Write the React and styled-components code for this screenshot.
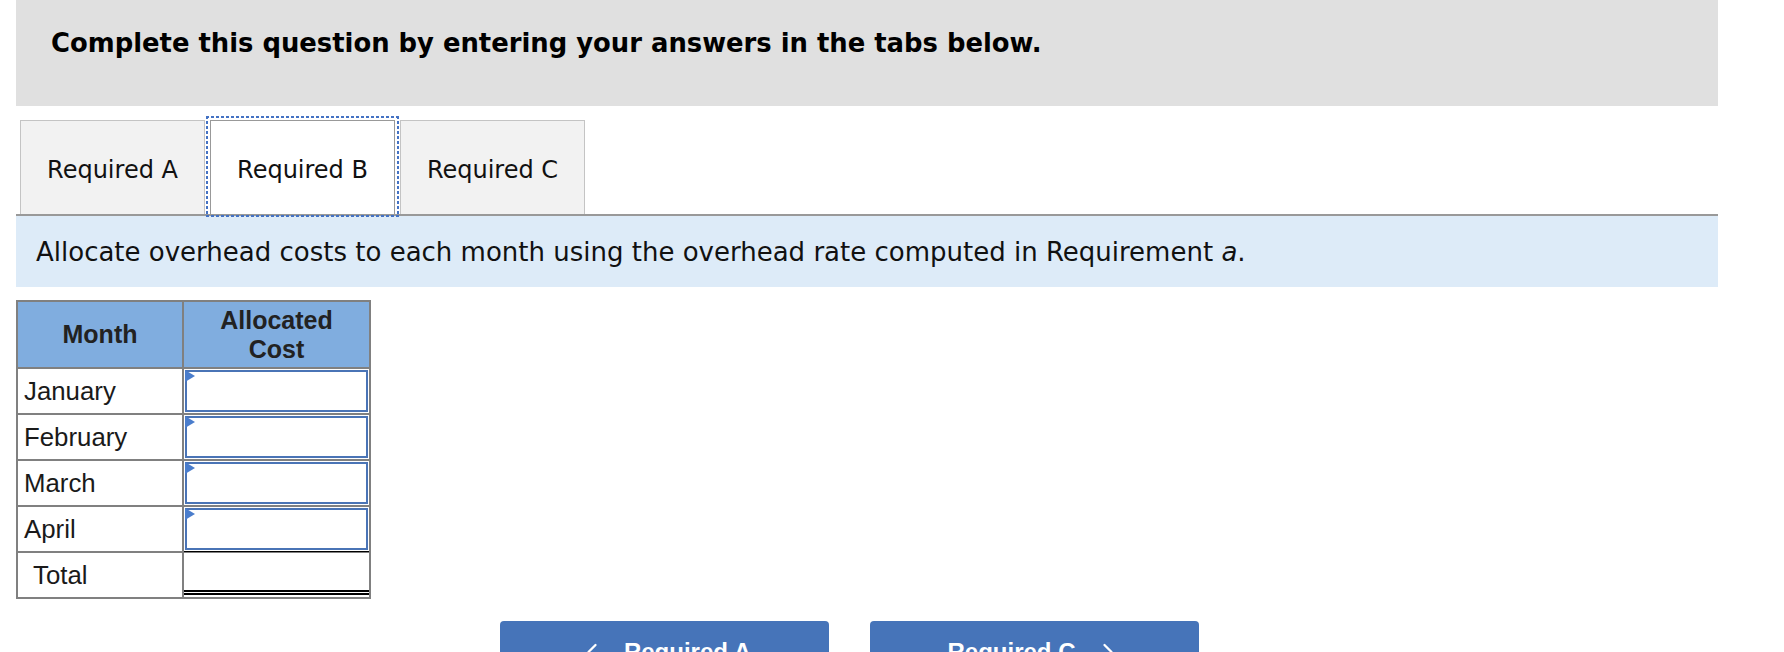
import React from 'react';
import styled, { createGlobalStyle } from 'styled-components';
import { ChevronLeft, ChevronRight } from 'lucide-react';

const GlobalStyle = createGlobalStyle`
  html, body {
    margin: 0;
    padding: 0;
    background: #fff;
  }
  body {
    font-family: "DejaVu Sans", Verdana, sans-serif;
    color: #111;
    overflow: hidden;
  }
`;

const Page = styled.div`
  width: 1702px;
  padding-left: 16px;
`;

const Header = styled.div`
  background: #e0e0e0;
  height: 106px;
  box-sizing: border-box;
  padding: 28px 0 0 35px;
  font-weight: bold;
  font-size: 25.85px;
  line-height: 30px;
  color: #000;
`;

const TabList = styled.div`
  display: flex;
  gap: 5px;
  margin-top: 14px;
  padding-left: 4px;
  border-bottom: 2px solid #999;
`;

const dots = '#4472c4 0 3px, transparent 3px 5px';

const Tab = styled.div`
  width: 185px;
  height: 94px;
  box-sizing: border-box;
  display: flex;
  align-items: center;
  justify-content: center;
  padding-top: 4px;
  font-size: 24px;
  color: #111;
  background: ${(p) => (p.$active ? '#fff' : '#f2f2f2')};
  border: 1px solid ${(p) => (p.$active ? '#999' : '#c4c4c4')};
  border-bottom: none;
  position: relative;
  z-index: ${(p) => (p.$active ? 1 : 0)};

  &::after {
    content: '';
    display: ${(p) => (p.$active ? 'block' : 'none')};
    position: absolute;
    left: -5px;
    right: -5px;
    top: -5px;
    bottom: -3px;
    background:
      repeating-linear-gradient(90deg, ${dots}) top left / 100% 2px no-repeat,
      repeating-linear-gradient(90deg, ${dots}) bottom left / 100% 2px no-repeat,
      repeating-linear-gradient(180deg, ${dots}) top left / 2px 100% no-repeat,
      repeating-linear-gradient(180deg, ${dots}) top right / 2px 100% no-repeat;
    pointer-events: none;
  }
`;

const Instruction = styled.div`
  background: #ddebf8;
  height: 71px;
  box-sizing: border-box;
  display: flex;
  align-items: center;
  padding-left: 20px;
  font-size: 26px;
  color: #111;

  em {
    font-style: italic;
  }
`;

const Grid = styled.table`
  margin-top: 13px;
  border-collapse: collapse;
  font-family: "Liberation Sans", Arial, sans-serif;
  font-size: 25.8px;
  color: #1a1a1a;
`;

const HeadCell = styled.th`
  background: #80addf;
  border: 2px solid #808080;
  height: 65px;
  padding: 0;
  width: ${(p) => p.$w}px;
  font-weight: bold;
  font-size: 25px;
  line-height: 29px;
  color: #222;
  text-align: center;
`;

const LabelCell = styled.td`
  border: 2px solid #808080;
  height: 44px;
  padding: 0 0 0 ${(p) => (p.$indent ? 15 : 6)}px;
  vertical-align: middle;
  line-height: 44px;
`;

const ValueCell = styled.td`
  border: 2px solid #808080;
  padding: 0;
  height: 44px;
  position: relative;
  vertical-align: top;
`;

const AnswerBox = styled.div`
  margin: 1px;
  height: 42px;
  box-sizing: border-box;
  border: 2px solid #4a74b6;
  background: #fff;
`;

const Marker = styled.span`
  position: absolute;
  left: 1px;
  top: 1px;
  width: 0;
  height: 0;
  border-left: 10px solid #4a7dcc;
  border-top: 6px solid transparent;
  border-bottom: 6px solid transparent;
`;

const TotalBox = styled.div`
  height: 44px;
  box-sizing: border-box;
  border-top: 1px solid #000;
  border-bottom: 5px double #000;
  margin-top: -2px;
`;

const NavRow = styled.div`
  display: flex;
  gap: 41px;
  margin-top: 22px;
  padding-left: 484px;
`;

const NavButton = styled.div`
  width: 329px;
  height: 62px;
  background: #4674b9;
  border-radius: 4px;
  display: flex;
  align-items: center;
  justify-content: center;
  gap: 18px;
  color: #fff;
  font-family: "Liberation Sans", Arial, sans-serif;
  font-weight: bold;
  font-size: 24px;
`;

const months = ['January', 'February', 'March', 'April'];

export default function App() {
  return (
    <>
      <GlobalStyle />
      <Page>
        <Header>Complete this question by entering your answers in the tabs below.</Header>
        <TabList>
          <Tab>Required A</Tab>
          <Tab $active>Required B</Tab>
          <Tab>Required C</Tab>
        </TabList>
        <Instruction>
          <span>
            Allocate overhead costs to each month using the overhead rate computed in Requirement <em>a</em>.
          </span>
        </Instruction>
        <Grid>
          <thead>
            <tr>
              <HeadCell $w={164}>Month</HeadCell>
              <HeadCell $w={185}>
                Allocated
                <br />
                Cost
              </HeadCell>
            </tr>
          </thead>
          <tbody>
            {months.map((m) => (
              <tr key={m}>
                <LabelCell>{m}</LabelCell>
                <ValueCell>
                  <AnswerBox />
                  <Marker />
                </ValueCell>
              </tr>
            ))}
            <tr>
              <LabelCell $indent>Total</LabelCell>
              <ValueCell>
                <TotalBox />
              </ValueCell>
            </tr>
          </tbody>
        </Grid>
        <NavRow>
          <NavButton>
            <ChevronLeft size={28} strokeWidth={2} />
            <span>Required A</span>
          </NavButton>
          <NavButton>
            <span>Required C</span>
            <ChevronRight size={28} strokeWidth={2} />
          </NavButton>
        </NavRow>
      </Page>
    </>
  );
}
